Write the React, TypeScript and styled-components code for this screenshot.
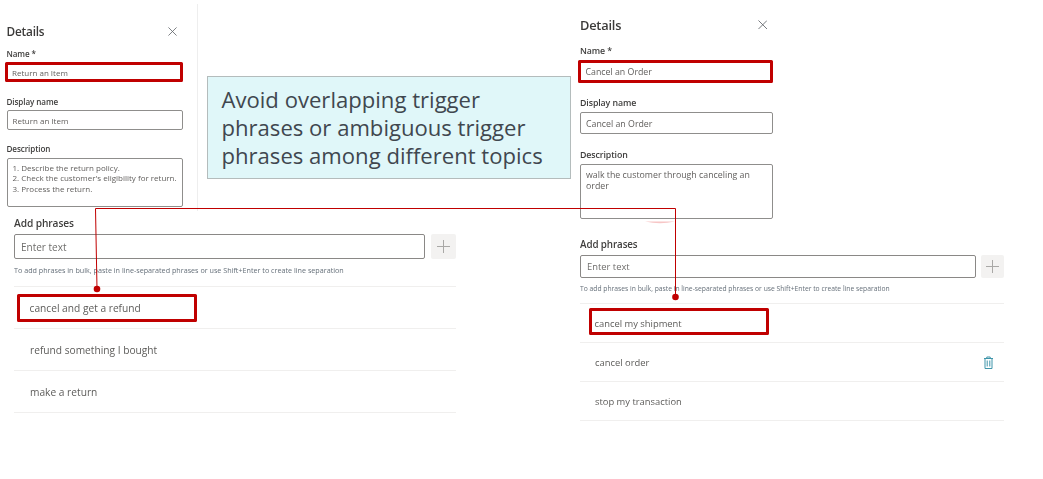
import React from "react";
import styled, { createGlobalStyle } from "styled-components";

const FONT = `"Open Sans", "Noto Sans", "Liberation Sans", sans-serif`;
const RED = "#c00000";

const Global = createGlobalStyle`
  html, body { margin: 0; padding: 0; background: #fff; }
  #root { width: 1043px; height: 479px; overflow: hidden; }
`;

const Page = styled.div`
  position: relative;
  display: flex;
  width: 1043px;
  height: 479px;
  background: #fff;
  font-family: ${FONT};
  color: #4a4a4a;
`;

const LeftColumn = styled.div`
  display: flex;
  flex-direction: column;
  width: 580px;
  flex: none;
`;

const TopRow = styled.div`
  display: flex;
  align-items: flex-start;
  padding-top: 4px;
`;

const RightColumn = styled.div`
  display: flex;
  flex-direction: column;
  width: 424px;
  flex: none;
`;

const DetailsPanel = styled.section<{ $divided?: boolean }>`
  display: flex;
  flex-direction: column;
  box-sizing: border-box;
  filter: blur(0.25px);
  ${(p) =>
    p.$divided
      ? `width: 198px; height: 207px; padding: 0 14.5px 0 6.5px; border-right: 1px solid #eeeeee;`
      : `width: 193px;`}
`;

const TitleRow = styled.div<{ $top: number; $height: number; $closeRight: number }>`
  display: flex;
  align-items: center;
  justify-content: space-between;
  margin-top: ${(p) => p.$top}px;
  height: ${(p) => p.$height}px;
  padding-right: ${(p) => p.$closeRight}px;
`;

const Title = styled.h2<{ $size: number }>`
  margin: 0;
  font-size: ${(p) => p.$size}px;
  font-weight: 600;
  color: #3b3a39;
  letter-spacing: -0.2px;
`;

const CloseIcon = styled.svg<{ $size: number }>`
  width: ${(p) => p.$size}px;
  height: ${(p) => p.$size}px;
  stroke: #5f6368;
  stroke-width: 0.9;
  fill: none;
`;

const Field = styled.div<{ $top: number; $gap: number }>`
  display: flex;
  flex-direction: column;
  margin-top: ${(p) => p.$top}px;
  gap: ${(p) => p.$gap}px;
`;

const FieldLabel = styled.label<{ $size: number }>`
  display: block;
  height: 12px;
  line-height: 12px;
  font-size: ${(p) => p.$size}px;
  font-weight: 600;
  color: #3f3e3d;
  letter-spacing: -0.1px;
  white-space: nowrap;
`;

const TextBox = styled.div<{ $height: number; $size: number; $pad: number }>`
  box-sizing: border-box;
  display: flex;
  align-items: center;
  height: ${(p) => p.$height}px;
  padding-left: ${(p) => p.$pad}px;
  padding-top: 1px;
  border: 1px solid #8f8e8c;
  border-radius: 2px;
  font-size: ${(p) => p.$size}px;
  color: #605e5c;
  white-space: nowrap;
`;

const HighlightedTextBox = styled(TextBox)<{ $out: number }>`
  margin-left: -${(p) => p.$out}px;
  padding-left: ${(p) => p.$pad + p.$out - 3.5}px;
  border: 3.5px solid ${RED};
  border-radius: 1.5px;
`;

const TextArea = styled.div<{ $height: number; $size: number; $line: number; $pad: number; $top: number }>`
  box-sizing: border-box;
  height: ${(p) => p.$height}px;
  padding: ${(p) => p.$top}px 0 0 ${(p) => p.$pad}px;
  border: 1px solid #8f8e8c;
  border-radius: 2px;
  font-size: ${(p) => p.$size}px;
  line-height: ${(p) => p.$line}px;
  color: #605e5c;
  white-space: pre-line;
`;

const Callout = styled.aside`
  box-sizing: border-box;
  width: 364px;
  height: 103px;
  margin: 72px 0 0 9px;
  padding: 8px 24px 0 13.5px;
  background: #e0f7f9;
  border: 1px solid #b4bcbc;
  font-size: 22.1px;
  line-height: 28px;
  color: #40474f;
`;

const PhrasesSection = styled.section<{ $left: number; $top: number; $width: number }>`
  display: flex;
  flex-direction: column;
  box-sizing: border-box;
  width: ${(p) => p.$width}px;
  margin-left: ${(p) => p.$left}px;
  margin-top: ${(p) => p.$top}px;
  filter: blur(0.25px);
`;

const SectionLabel = styled.h3<{ $size: number }>`
  margin: 0;
  height: 12px;
  line-height: 12px;
  font-size: ${(p) => p.$size}px;
  font-weight: 600;
  color: #3f3e3d;
  letter-spacing: -0.1px;
`;

const EntryRow = styled.div<{ $top: number; $height: number; $gap: number }>`
  display: flex;
  gap: ${(p) => p.$gap}px;
  margin-top: ${(p) => p.$top}px;
  height: ${(p) => p.$height}px;
`;

const EntryInput = styled.div<{ $size: number; $pad: number }>`
  flex: 1;
  box-sizing: border-box;
  display: flex;
  align-items: center;
  padding-left: ${(p) => p.$pad}px;
  border: 1px solid #8a8886;
  border-radius: 2px;
  font-size: ${(p) => p.$size}px;
  color: #6f6e6c;
`;

const AddButton = styled.div<{ $width: number }>`
  flex: none;
  display: flex;
  align-items: center;
  justify-content: center;
  width: ${(p) => p.$width}px;
  background: #f3f2f1;
  border-radius: 2px;
`;

const PlusIcon = styled.svg`
  width: 13px;
  height: 13px;
  stroke: #a9a8a6;
  stroke-width: 1;
  fill: none;
`;

const Hint = styled.p<{ $size: number; $top: number }>`
  margin: ${(p) => p.$top}px 0 0;
  height: 12px;
  line-height: 12px;
  font-size: ${(p) => p.$size}px;
  color: #66707a;
  white-space: nowrap;
`;

const PhraseList = styled.ul<{ $top: number }>`
  list-style: none;
  margin: ${(p) => p.$top}px 0 0;
  padding: 0;
  border-top: 1px solid #f0efee;
`;

const PhraseRow = styled.li<{ $height: number; $inset: number; $size: number }>`
  box-sizing: border-box;
  display: flex;
  align-items: center;
  justify-content: space-between;
  height: ${(p) => p.$height}px;
  padding: 0 ${(p) => p.$inset - 5}px 0 ${(p) => p.$inset}px;
  border-bottom: 1px solid #f0efee;
  font-size: ${(p) => p.$size}px;
  color: #5d5c5a;
`;

const PhraseHighlight = styled.div<{ $out: number; $height: number; $raise: number; $drop: number }>`
  box-sizing: border-box;
  display: flex;
  align-items: center;
  width: 180px;
  height: ${(p) => p.$height}px;
  margin-left: -${(p) => p.$out}px;
  margin-top: -${(p) => p.$raise}px;
  padding-left: ${(p) => p.$out - 3.5}px;
  padding-top: ${(p) => p.$drop}px;
  border: 3.5px solid ${RED};
  border-radius: 1.5px;
`;

const TrashIcon = styled.svg`
  width: 11px;
  height: 13px;
  stroke: #3f95aa;
  stroke-width: 1;
  fill: none;
`;

const Overlay = styled.svg`
  position: absolute;
  left: 0;
  top: 0;
  width: 1043px;
  height: 479px;
  pointer-events: none;
`;

const Close = ({ size }: { size: number }) => (
  <CloseIcon $size={size} viewBox="0 0 10 10">
    <path d="M0.5 0.5 9.5 9.5M9.5 0.5 0.5 9.5" />
  </CloseIcon>
);

const Plus = () => (
  <PlusIcon viewBox="0 0 13 13">
    <path d="M6.5 0V13M0 6.5H13" />
  </PlusIcon>
);

const Trash = () => (
  <TrashIcon viewBox="0 0 11 13">
    <path d="M1 2.5H10M3.8 2.5V1H7.2V2.5M2 2.5V12.5H9V2.5M4.2 4.5V10.5M6.8 4.5V10.5" />
  </TrashIcon>
);

export default function App() {
  return (
    <Page>
      <Global />
      <LeftColumn>
        <TopRow>
          <DetailsPanel $divided>
            <TitleRow $top={18} $height={18} $closeRight={6}>
              <Title $size={11.8}>Details</Title>
              <Close size={9} />
            </TitleRow>
            <Field $top={8} $gap={2}>
              <FieldLabel $size={8.1}>Name *</FieldLabel>
              <HighlightedTextBox $height={20} $size={8} $pad={6} $out={1.5}>Return an Item</HighlightedTextBox>
            </Field>
            <Field $top={14} $gap={2}>
              <FieldLabel $size={8.1}>Display name</FieldLabel>
              <TextBox $height={20} $size={8} $pad={5}>Return an Item</TextBox>
            </Field>
            <Field $top={13} $gap={3}>
              <FieldLabel $size={8.1}>Description</FieldLabel>
              <TextArea $height={49} $size={8} $line={10.3} $pad={5} $top={4}>
                {"1. Describe the return policy.\n2. Check the customer's eligibility for return.\n3. Process the return."}
              </TextArea>
            </Field>
          </DetailsPanel>
          <Callout>
            Avoid overlapping trigger phrases or ambiguous trigger phrases among different topics
          </Callout>
        </TopRow>
        <PhrasesSection $left={14} $top={6} $width={442}>
          <SectionLabel $size={10.2}>Add phrases</SectionLabel>
          <EntryRow $top={5} $height={25} $gap={6}>
            <EntryInput $size={10} $pad={6}>Enter text</EntryInput>
            <AddButton $width={25}>
              <Plus />
            </AddButton>
          </EntryRow>
          <Hint $size={7.2} $top={5}>To add phrases in bulk, paste in line-separated phrases or use Shift+Enter to create line separation</Hint>
          <PhraseList $top={10}>
            <PhraseRow $height={42} $inset={16} $size={10.2}>
              <PhraseHighlight $out={13} $height={28} $raise={0} $drop={0}>cancel and get a refund</PhraseHighlight>
            </PhraseRow>
            <PhraseRow $height={42} $inset={16} $size={10.2}>refund something I bought</PhraseRow>
            <PhraseRow $height={42} $inset={16} $size={10.2}>make a return</PhraseRow>
          </PhraseList>
        </PhrasesSection>
      </LeftColumn>

      <RightColumn>
        <DetailsPanel>
          <TitleRow $top={16} $height={18} $closeRight={6}>
            <Title $size={12.8}>Details</Title>
            <Close size={9.5} />
          </TitleRow>
          <Field $top={11} $gap={3}>
            <FieldLabel $size={8.8}>Name *</FieldLabel>
            <HighlightedTextBox $height={23} $size={8.8} $pad={6} $out={2}>Cancel an Order</HighlightedTextBox>
          </Field>
          <Field $top={14} $gap={3}>
            <FieldLabel $size={8.8}>Display name</FieldLabel>
            <TextBox $height={22} $size={8.8} $pad={5}>Cancel an Order</TextBox>
          </Field>
          <Field $top={15} $gap={3}>
            <FieldLabel $size={8.8}>Description</FieldLabel>
            <TextArea $height={55} $size={8.8} $line={11} $pad={5} $top={5}>
              walk the customer through canceling an order
            </TextArea>
          </Field>
        </DetailsPanel>
        <PhrasesSection $left={0} $top={20} $width={424}>
          <SectionLabel $size={9.8}>Add phrases</SectionLabel>
          <EntryRow $top={4} $height={23} $gap={5.5}>
            <EntryInput $size={9.4} $pad={6}>Enter text</EntryInput>
            <AddButton $width={23}>
              <Plus />
            </AddButton>
          </EntryRow>
          <Hint $size={6.75} $top={5}>To add phrases in bulk, paste in line-separated phrases or use Shift+Enter to create line separation</Hint>
          <PhraseList $top={8}>
            <PhraseRow $height={39} $inset={15} $size={9.4}>
              <PhraseHighlight $out={6} $height={27} $raise={3} $drop={3}>cancel my shipment</PhraseHighlight>
            </PhraseRow>
            <PhraseRow $height={39} $inset={15} $size={9.4}>
              cancel order
              <Trash />
            </PhraseRow>
            <PhraseRow $height={39} $inset={15} $size={9.4}>stop my transaction</PhraseRow>
          </PhraseList>
        </PhrasesSection>
      </RightColumn>

      <Overlay viewBox="0 0 1043 479">
        <path d="M645 221.5Q660 225 675 221.5Z" fill="#f7c6c6" />
        <path d="M97 289 95.5 208.5H675.5V297" fill="none" stroke={RED} strokeWidth="1" />
        <circle cx="97" cy="289" r="3.3" fill={RED} />
        <circle cx="675.5" cy="297" r="3.3" fill={RED} />
      </Overlay>
    </Page>
  );
}
